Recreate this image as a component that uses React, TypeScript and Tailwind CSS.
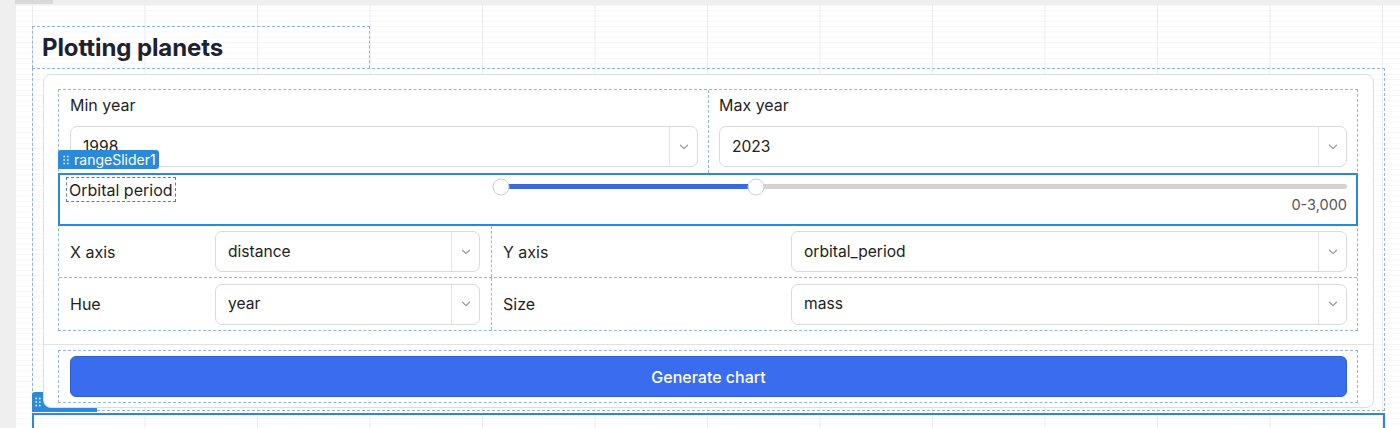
import React from 'react'

function Chevron() {
  return (
    <svg width="10" height="6" viewBox="0 0 10 6" fill="none">
      <path d="M1.5 1.2L5 4.6l3.5-3.4" stroke="#9b9b9b" strokeWidth="1.3" strokeLinecap="round" strokeLinejoin="round" />
    </svg>
  )
}

function Dots({ color = '#cfe6fa' }: { color?: string }) {
  return (
    <svg width="6" height="10" viewBox="0 0 6 10" fill={color}>
      <circle cx="1.2" cy="1.5" r="1" />
      <circle cx="4.8" cy="1.5" r="1" />
      <circle cx="1.2" cy="5" r="1" />
      <circle cx="4.8" cy="5" r="1" />
      <circle cx="1.2" cy="8.5" r="1" />
      <circle cx="4.8" cy="8.5" r="1" />
    </svg>
  )
}

function Select({ value, className = '' }: { value: string; className?: string }) {
  return (
    <div className={`flex h-[41px] items-stretch rounded-[7px] border border-[#dadada] bg-white ${className}`}>
      <div className="flex flex-1 items-center pl-[12px] text-[15.6px] text-[#222]">{value}</div>
      <div className="flex w-[28px] items-center justify-center border-l border-[#e3e3e3]">
        <Chevron />
      </div>
    </div>
  )
}

export default function App() {
  return (
    <div className="relative h-[428px] w-full overflow-hidden bg-[#efefef] font-['Inter',sans-serif]">
      {/* tab stub */}
      <div className="absolute left-[15px] top-0 h-[4px] w-[38px] bg-[#d9d9d9]" />

      {/* Canvas */}
      <div className="ml-[16px] mt-[5px] h-[423px] bg-white bg-[linear-gradient(to_right,#ececec_1px,transparent_1px),linear-gradient(to_bottom,#f6f6f6_1px,transparent_1px)] bg-[size:112.5px_100%,100%_5.3px] bg-[position:16px_0] pl-[16px] pr-[15px] pt-[21px]">
        {/* Title */}
        <div className="flex h-[42px] w-[338px] items-center border border-b-0 border-dashed border-[#93b6d6] pl-[9px]">
          <h1 className="text-[24px] font-bold tracking-[-0.1px] text-[#1c2230]">Plotting planets</h1>
        </div>

        {/* Container */}
        <div className="relative border border-dashed border-[#93b6d6] pb-[2px]">
          {/* next component's tag, tucked behind card */}
          <div className="absolute left-[-1px] top-[323px] flex h-[20px] w-[65px] items-start rounded-t-[3px] bg-[#2b8ad8] pl-[3px] pt-[5px]">
            <Dots />
          </div>

          {/* Card */}
          <div className="relative z-10 mx-[10px] mt-[5px] rounded-[8px] border border-[#dedede] bg-white">
            <div className="pb-[13px] pl-[14px] pr-[15px] pt-[14px]">
              <div className="border border-dashed border-[#93b6d6]">
                {/* Year row */}
                <div className="grid grid-cols-[650px_1fr]">
                  <div className="border-r border-dashed border-[#93b6d6] pb-[6px] pl-[11px] pr-[10px] pt-[5px]">
                    <div className="h-[20px] text-[16px] leading-[20px] text-[#1f1f1f]">Min year</div>
                    <Select value="1998" className="mt-[11px]" />
                  </div>
                  <div className="pb-[6px] pl-[10px] pr-[10px] pt-[5px]">
                    <div className="h-[20px] text-[16px] leading-[20px] text-[#1f1f1f]">Max year</div>
                    <Select value="2023" className="mt-[11px]" />
                  </div>
                </div>

                {/* Range slider (selected) */}
                <div className="relative -mx-px flex h-[53px] border-2 border-[#2b8ad8]">
                  <div className="absolute left-[-2px] top-[-25px] flex h-[19px] w-[101px] items-center gap-[5px] rounded-t-[3px] rounded-br-[3px] bg-[#2b8ad8] pl-[5px] text-[14px] leading-none text-white">
                    <Dots />
                    <span>rangeSlider1</span>
                  </div>
                  <div className="w-[441px] pl-[6px] pt-[2px]">
                    <div className="inline-flex h-[25px] items-center border border-dashed border-[#5b7f9e] px-[2px] text-[16px] text-[#1f1f1f]">
                      Orbital period
                    </div>
                  </div>
                  <div className="flex flex-1 flex-col pr-[9px] pt-[9px]">
                    <div className="relative h-[5px] rounded-full bg-[#d7d1d1]">
                      <div className="h-full w-[30.1%] rounded-l-full bg-[#3b69e0]" />
                      <div className="absolute left-0 top-1/2 h-[17px] w-[17px] -translate-x-1/2 -translate-y-1/2 rounded-full border border-[#cfcfcf] bg-white" />
                      <div className="absolute left-[30.1%] top-1/2 h-[17px] w-[17px] -translate-x-1/2 -translate-y-1/2 rounded-full border border-[#cfcfcf] bg-white" />
                    </div>
                    <div className="mt-[7px] text-right text-[14.5px] leading-[18px] text-[#555]">0-3,000</div>
                  </div>
                </div>

                {/* Axis rows */}
                <div className="grid h-[52px] grid-cols-[433px_1fr] border-b border-dashed border-[#93b6d6]">
                  <div className="flex items-center border-r border-dashed border-[#93b6d6] pl-[11px] pr-[11px]">
                    <div className="flex-1 text-[16px] text-[#1f1f1f]">X axis</div>
                    <Select value="distance" className="w-[265px]" />
                  </div>
                  <div className="flex items-center pl-[11px] pr-[10px]">
                    <div className="flex-1 text-[16px] text-[#1f1f1f]">Y axis</div>
                    <Select value="orbital_period" className="w-[556px]" />
                  </div>
                </div>
                <div className="grid h-[52px] grid-cols-[433px_1fr]">
                  <div className="flex items-center border-r border-dashed border-[#93b6d6] pl-[11px] pr-[11px]">
                    <div className="flex-1 text-[16px] text-[#1f1f1f]">Hue</div>
                    <Select value="year" className="w-[265px]" />
                  </div>
                  <div className="flex items-center pl-[11px] pr-[10px]">
                    <div className="flex-1 text-[16px] text-[#1f1f1f]">Size</div>
                    <Select value="mass" className="w-[556px]" />
                  </div>
                </div>
              </div>
            </div>

            {/* Footer */}
            <div className="border-t border-[#e3e3e3] pb-[4px] pl-[14px] pr-[15px] pt-[5px]">
              <div className="border border-dashed border-[#93b6d6] py-[5px] pl-[11px] pr-[10px]">
                <button className="flex h-[41px] w-full items-center justify-center rounded-[6px] border border-[#2e5fd6] bg-[#3a6cf0] text-[16px] font-medium text-white">
                  Generate chart
                </button>
              </div>
            </div>
          </div>
        </div>

        {/* Next component (selected) */}
        <div className="mt-[2px] h-[40px] border-2 border-b-0 border-[#2b8ad8]" />
      </div>
    </div>
  )
}
